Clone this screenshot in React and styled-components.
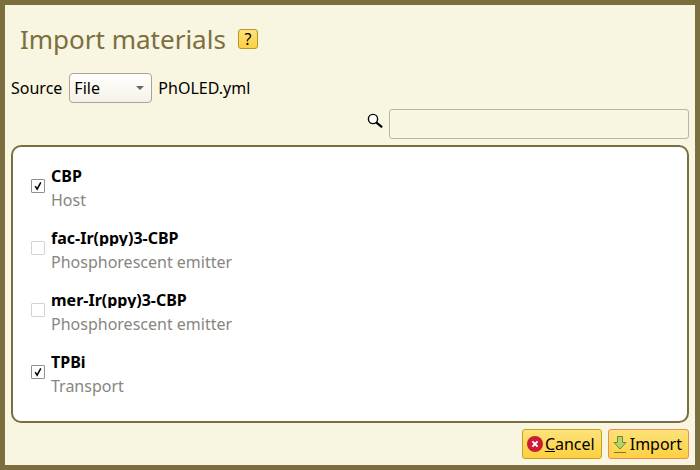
import React from "react";
import styled, { createGlobalStyle } from "styled-components";

const materials = [
  { name: "CBP", role: "Host", checked: true },
  { name: "fac-Ir(ppy)3-CBP", role: "Phosphorescent emitter", checked: false },
  { name: "mer-Ir(ppy)3-CBP", role: "Phosphorescent emitter", checked: false },
  { name: "TPBi", role: "Transport", checked: true },
];

const App = () => {
  return (
    <Dialog>
      <GlobalStyle />
      <TitleRow>
        <Title>Import materials</Title>
        <HelpButton>?</HelpButton>
      </TitleRow>
      <SourceRow>
        <SourceLabel>Source</SourceLabel>
        <SourceSelect>
          File
          <Caret />
        </SourceSelect>
        <span>PhOLED.yml</span>
      </SourceRow>
      <SearchRow>
        <SearchIcon width="16" height="16" viewBox="0 0 16 16">
          <circle cx="6" cy="6" r="4.6" fill="#fff" stroke="#000" strokeWidth="1.4" />
          <path d="M9.8 9.8l4.6 3.9" stroke="#000" strokeWidth="2.2" strokeLinecap="round" />
        </SearchIcon>
        <SearchInput />
      </SearchRow>
      <Panel>
        {materials.map((m) => (
          <Item key={m.name}>
            <CheckBox $checked={m.checked}>
              {m.checked && (
                <svg width="10" height="10" viewBox="0 0 10 10">
                  <path d="M2.2 5.2l1.9 3L7.8 1.4" fill="none" stroke="#000" strokeWidth="1.5" />
                </svg>
              )}
            </CheckBox>
            <div>
              <Name>{m.name}</Name>
              <Role>{m.role}</Role>
            </div>
          </Item>
        ))}
      </Panel>
      <Footer>
        <ActionButton>
          <svg width="16" height="16" viewBox="0 0 16 16">
            <circle cx="8" cy="8" r="8" fill="#cc1b37" />
            <path d="M5.4 5.4l5.2 5.2M10.6 5.4l-5.2 5.2" stroke="#fff" strokeWidth="2" />
          </svg>
          <span>
            <u>C</u>ancel
          </span>
        </ActionButton>
        <ActionButton $primary>
          <svg width="16" height="19" viewBox="0 0 16 19">
            <path d="M5.5 1.5h5v6h3.5L8 14 2 7.5h3.5z" fill="#b5d56a" stroke="#6f8a35" />
            <path d="M2 17.5h12" stroke="#6f7a35" strokeWidth="1" />
          </svg>
          <span>Import</span>
        </ActionButton>
      </Footer>
    </Dialog>
  );
};

const GlobalStyle = createGlobalStyle`
  html, body {
    margin: 0;
    padding: 0;
  }
  body {
    font-family: "Noto Sans", sans-serif;
    font-size: 16px;
    color: #000;
  }
`;
const Dialog = styled.div`
  box-sizing: border-box;
  width: 700px;
  height: 470px;
  border: 5px solid #7b6f40;
  background: #f8f5e0;
  padding: 0 6px;
  display: flex;
  flex-direction: column;
  overflow: hidden;
`;
const TitleRow = styled.div`
  display: flex;
  align-items: center;
  height: 42px;
  margin-top: 13px;
  padding-left: 9px;
  gap: 12px;
`;
const Title = styled.h1`
  margin: 0;
  font-size: 26px;
  font-weight: 400;
  color: #7b6f40;
  line-height: 42px;
`;
const HelpButton = styled.div`
  box-sizing: border-box;
  width: 20px;
  height: 20px;
  border: 1px solid #b8962a;
  border-radius: 3px;
  background: linear-gradient(#fbe27c, #fdd03f);
  font-size: 16px;
  line-height: 18px;
  text-align: center;
`;
const SourceRow = styled.div`
  display: flex;
  align-items: center;
  height: 32px;
  margin-top: 12px;
  gap: 6px;
`;
const SourceLabel = styled.span`
  margin-right: 1px;
`;
const SourceSelect = styled.div`
  box-sizing: border-box;
  position: relative;
  width: 83px;
  height: 30px;
  line-height: 28px;
  padding-left: 4px;
  border: 1px solid #a8a598;
  border-radius: 4px;
  background: linear-gradient(#ffffff, #f5f2e6);
`;
const Caret = styled.span`
  position: absolute;
  right: 7px;
  top: 12px;
  border-left: 4px solid transparent;
  border-right: 4px solid transparent;
  border-top: 4px solid #666;
`;
const SearchRow = styled.div`
  display: flex;
  align-items: center;
  justify-content: flex-end;
  height: 30px;
  margin-top: 5px;
  gap: 6px;
`;
const SearchIcon = styled.svg`
  margin-bottom: 6px;
`;
const SearchInput = styled.div`
  box-sizing: border-box;
  width: 300px;
  height: 30px;
  border: 1px solid #b9b6a4;
  border-radius: 3px;
  background: #f8f5e0;
`;
const Panel = styled.div`
  box-sizing: border-box;
  height: 278px;
  margin-top: 6px;
  padding: 10px 18px;
  border: 2px solid #7b6f40;
  border-radius: 10px;
  background: #fff;
  display: flex;
  flex-direction: column;
`;
const Item = styled.div`
  display: flex;
  align-items: center;
  height: 62px;
  gap: 6px;
`;
const CheckBox = styled.div`
  box-sizing: border-box;
  width: 14px;
  height: 14px;
  margin-top: -4px;
  border: 1px solid ${(p) => (p.$checked ? "#8f8f8f" : "#d4d4d4")};
  border-radius: 1px;
  background: #fff;
  display: flex;
  align-items: center;
  justify-content: center;
`;
const Name = styled.div`
  font-weight: 700;
  line-height: 24px;
  height: 20px;
  margin-bottom: 4px;
  overflow: hidden;
`;
const Role = styled.div`
  color: #87867f;
  line-height: 24px;
`;
const Footer = styled.div`
  display: flex;
  justify-content: flex-end;
  gap: 6px;
  margin-top: 6px;
`;
const ActionButton = styled.div`
  box-sizing: border-box;
  height: 30px;
  padding: 0 6px 0 ${(p) => (p.$primary ? "3px" : "4px")};
  display: flex;
  align-items: center;
  gap: 2px;
  border: 1px solid ${(p) => (p.$primary ? "#f0885a" : "#c8a020")};
  border-radius: 3px;
  background: linear-gradient(#fde27a, #fdd040);
  font-size: 16px;
`;

export default App;
